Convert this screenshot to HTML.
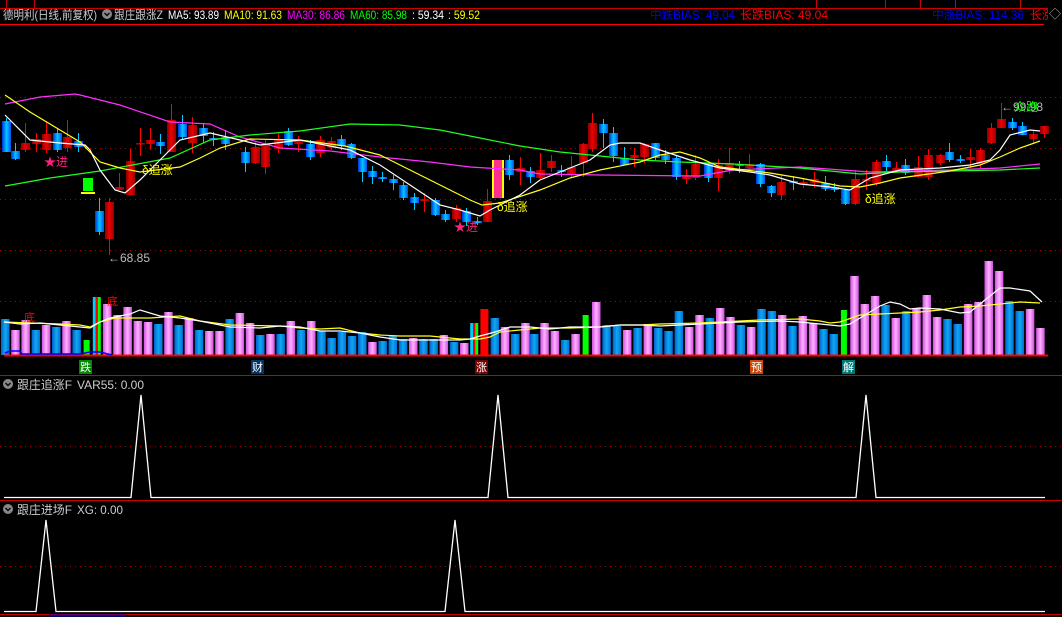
<!DOCTYPE html><html><head><meta charset="utf-8"><style>
html,body{margin:0;padding:0;background:#000;width:1062px;height:617px;overflow:hidden}
svg{display:block}
text{font-family:"Liberation Sans","Noto Sans CJK SC",sans-serif}
</style></head><body>
<svg id="s" width="1062" height="617" xmlns="http://www.w3.org/2000/svg">
<defs>
<linearGradient id="gr" x1="0" x2="1"><stop offset="0" stop-color="#800"/><stop offset=".45" stop-color="#e00"/><stop offset="1" stop-color="#900"/></linearGradient>
<linearGradient id="gb" x1="0" x2="1"><stop offset="0" stop-color="#0030e0"/><stop offset=".5" stop-color="#00c8ff"/><stop offset="1" stop-color="#0050f0"/></linearGradient>
<linearGradient id="gp" x1="0" x2="1"><stop offset="0" stop-color="#d050e0"/><stop offset=".5" stop-color="#ffb0ff"/><stop offset="1" stop-color="#d050e0"/></linearGradient>
<linearGradient id="gvb" x1="0" x2="1"><stop offset="0" stop-color="#0060d0"/><stop offset=".5" stop-color="#10a8f0"/><stop offset="1" stop-color="#0070d8"/></linearGradient>
</defs>
<g id="grid" stroke="#a00" stroke-dasharray="1,4" stroke-width="1">
<line x1="0" y1="97.5" x2="1062" y2="97.5"/><line x1="0" y1="148.5" x2="1062" y2="148.5"/><line x1="0" y1="199.5" x2="1062" y2="199.5"/><line x1="0" y1="250.5" x2="1062" y2="250.5"/>
<line x1="0" y1="301.5" x2="1062" y2="301.5"/><line x1="0" y1="446.5" x2="1062" y2="446.5"/><line x1="0" y1="566.5" x2="1062" y2="566.5"/>
</g>
<g stroke="#c00" stroke-width="1">
<line x1="0" y1="8.5" x2="1062" y2="8.5"/>
<line x1="6.5" y1="0" x2="6.5" y2="8"/><line x1="34.5" y1="0" x2="34.5" y2="8"/>
<line x1="816.5" y1="0" x2="816.5" y2="8"/><line x1="885.5" y1="0" x2="885.5" y2="8"/><line x1="920.5" y1="0" x2="920.5" y2="8"/><line x1="955.5" y1="0" x2="955.5" y2="8"/><line x1="1020.5" y1="0" x2="1020.5" y2="8"/><line x1="1048.5" y1="0" x2="1048.5" y2="8"/>
</g>
<line x1="0" y1="24.5" x2="1044" y2="24.5" stroke="#f00" stroke-width="1"/>
<line x1="0" y1="375.5" x2="1062" y2="375.5" stroke="#c00"/>
<line x1="0" y1="500.5" x2="1062" y2="500.5" stroke="#c00"/>
<line x1="0" y1="614.5" x2="1062" y2="614.5" stroke="#c00"/>
<line x1="49" y1="615.5" x2="126" y2="615.5" stroke="#00c" stroke-width="2"/>
<g id="c"></g>
<g fill="none" stroke-width="1.2">
<polyline stroke="#ff30ff" points="5,104 40,97 75,94 80,95 120,105 170,122 210,124 240,137 280,148 330,151 380,157 430,162 470,167 520,170 540,174 600,175 700,176 733,170 800,167 870,172 950,170 1000,168 1040,164"/>
<polyline stroke="#20ff20" points="5,186 50,178 100,171 170,158 210,140 250,135 300,131 350,124 400,125 440,130 480,138 520,146 560,152 600,156 640,160 680,162 733,164 800,168 860,174 900,172 950,171 1000,170 1040,168"/>
<polyline stroke="#ffff20" points="5,95 30,112 60,130 80,142 100,162 120,168 140,172 180,167 200,158 220,148 250,139 300,140 345,146 380,155 420,175 450,190 470,200 482,205 500,203 540,190 570,178 600,170 640,162 660,155 680,152 700,158 720,167 770,173 800,178 840,186 860,187 880,183 900,178 950,171 980,165 1000,157 1020,148 1040,141"/>
<polyline stroke="#fff" points="5,115 15,125 30,140 60,143 85,145 90,150 100,170 115,190 125,193 140,180 160,160 180,140 210,133 240,140 260,145 300,140 350,150 380,165 410,185 440,205 460,210 480,216 490,210 520,195 540,180 560,172 590,160 610,145 620,143 640,143 660,150 690,160 720,168 750,172 770,175 800,184 830,187 850,190 870,178 900,170 940,168 970,165 990,160 1000,150 1010,135 1030,130 1040,131"/>
</g>
<rect x="83" y="178" width="10" height="13" fill="#0f0"/><rect x="81" y="192" width="14" height="2" fill="#ff0"/>
<g font-size="12">
<text x="44" y="166" fill="#ff2080">★进</text>
<text x="454" y="231" fill="#ff2080">★进</text>
<text x="142" y="174" fill="#ff0">δ追涨</text>
<text x="497" y="211" fill="#ff0">δ追涨</text>
<text x="865" y="203" fill="#ff0">δ追涨</text>
<text x="108" y="262" fill="#bbb">←68.85</text>
<text x="1001" y="111" fill="#bbb">←99.98</text>
<text x="1014" y="111" fill="#0f0">众跑</text>
</g>
<g id="v"></g>
<line x1="4" y1="355.5" x2="1048" y2="355.5" stroke="#f00" stroke-width="2"/>
<polyline fill="none" stroke="#00f" stroke-width="1.5" points="5,353 10,351 20,351 22,354 80,354 85,353 90,352 100,352 112,355"/>
<g fill="none" stroke-width="1.2">
<polyline stroke="#ffff20" points="4,322 30,323 60,324 80,325 90,327 100,322 115,318 150,318 180,316 200,321 230,325 280,326 300,328 320,329 340,328 360,333 380,335 400,336 430,336 460,339 470,339 480,339 490,337 500,332 520,330 540,328 570,328 600,327 620,325 640,325 660,324 700,323 740,321 760,320 800,319 820,321 830,323 840,322 860,315 880,314 900,313 920,312 940,310 960,307 980,306 1000,304 1020,302 1040,303"/>
<polyline stroke="#fff" points="4,322 20,324 40,323 60,325 80,327 90,328 100,322 110,318 130,314 140,310 160,316 180,318 200,321 230,327 260,328 280,326 300,327 320,331 340,331 360,333 380,337 400,340 430,340 460,340 470,339 480,336 495,332 510,327 530,327 550,329 570,327 600,327 620,325 640,325 660,326 680,325 700,324 740,322 780,321 800,322 820,324 840,326 850,324 860,318 870,312 880,306 890,302 900,304 910,309 920,308 940,309 960,313 970,312 980,304 990,296 1000,288 1010,288 1030,291 1042,302"/>
</g>
<g font-size="11" fill="#f00"><text x="24" y="321">底</text><text x="107" y="305">底</text></g>
<g font-size="11" fill="#fff">
<rect x="79" y="360" width="13" height="14" fill="#080"/><text x="80" y="371">跌</text>
<rect x="251" y="360" width="13" height="14" fill="#036"/><text x="252" y="371">财</text>
<rect x="475" y="360" width="13" height="14" fill="#700"/><text x="476" y="371">涨</text>
<rect x="750" y="360" width="13" height="14" fill="#c40"/><text x="751" y="371">预</text>
<rect x="842" y="360" width="13" height="14" fill="#077"/><text x="843" y="371">解</text>
</g>
<g fill="none" stroke="#fff" stroke-width="1.3">
<polyline points="4,497.5 131,497.5 141,395 151,497.5 488,497.5 498,395 508,497.5 856,497.5 866,395 876,497.5 1045,497.5"/>
<polyline points="4,611.5 36,611.5 46,520 56,611.5 445,611.5 455,520 465,611.5 1045,611.5"/>
</g>
<g font-size="12" lengthAdjust="spacingAndGlyphs">
<circle cx="107" cy="14" r="5" fill="#888"/><path d="M104.5 13 L107 15.5 L109.5 13" stroke="#000" stroke-width="1.3" fill="none"/>
<circle cx="8" cy="384" r="5" fill="#888"/><path d="M5.5 383 L8 385.5 L10.5 383" stroke="#000" stroke-width="1.3" fill="none"/>
<circle cx="8" cy="509" r="5" fill="#888"/><path d="M5.5 508 L8 510.5 L10.5 508" stroke="#000" stroke-width="1.3" fill="none"/>
<text x="3" y="19" fill="#ccc" textLength="94" lengthAdjust="spacingAndGlyphs">德明利(日线,前复权)</text>
<text x="114" y="19" fill="#ccc" textLength="49" lengthAdjust="spacingAndGlyphs">跟庄跟涨Z</text>
<text x="168" y="19" fill="#fff" textLength="51" lengthAdjust="spacingAndGlyphs">MA5: 93.89</text>
<text x="224" y="19" fill="#ff0" textLength="58" lengthAdjust="spacingAndGlyphs">MA10: 91.63</text>
<text x="287" y="19" fill="#f0f" textLength="58" lengthAdjust="spacingAndGlyphs">MA30: 86.86</text>
<text x="350" y="19" fill="#0f0" textLength="57" lengthAdjust="spacingAndGlyphs">MA60: 85.98</text>
<text x="412" y="19" fill="#fff" textLength="32" lengthAdjust="spacingAndGlyphs">: 59.34</text>
<text x="448" y="19" fill="#ff0" textLength="32" lengthAdjust="spacingAndGlyphs">: 59.52</text>
<text x="650" y="19" fill="#00f" textLength="85" lengthAdjust="spacingAndGlyphs">中跌BIAS: 49.04</text>
<text x="740" y="19" fill="#f00" textLength="88" lengthAdjust="spacingAndGlyphs">长跌BIAS: 49.04</text>
<text x="932" y="19" fill="#00f" textLength="92" lengthAdjust="spacingAndGlyphs">中涨BIAS: 114.36</text>
<text x="1030" y="19" fill="#f00">长涨</text>
<rect x="1048" y="0" width="14" height="24" fill="#000"/>
<text x="1049" y="18" fill="#aaa">◇</text>
<text x="17" y="389" fill="#ccc" textLength="55" lengthAdjust="spacingAndGlyphs">跟庄追涨F</text><text x="77" y="389" fill="#ccc" textLength="67" lengthAdjust="spacingAndGlyphs">VAR55: 0.00</text>
<text x="17" y="514" fill="#ccc" textLength="55" lengthAdjust="spacingAndGlyphs">跟庄进场F</text><text x="77" y="514" fill="#ccc" textLength="46" lengthAdjust="spacingAndGlyphs">XG: 0.00</text>
</g>
</svg>
<script>
var C=[[1,121,152,118,152,'b'],[10,151,159,143,160,'b'],[20,143,150,123,152,'r'],[31,139,144,133,152,'r'],[41,134,150,122,153,'r'],[52,133,150,128,152,'b'],[62,137,148,120,152,'r'],[73,141,147,133,152,'b'],
[94,211,232,198,235,'b'],[104,202,239,198,255,'r'],[114,187,190,173,190,'r'],[125,161,195,149,195,'r'],[135,143,144,128,156,'r'],[145,140,144,128,150,'r'],[155,142,146,134,154,'b'],[166,120,152,104,152,'r'],[177,124,137,115,140,'b'],[187,125,143,117,153,'r'],[198,128,136,124,143,'b'],[208,138,140,132,146,'b'],[220,137,144,130,150,'b'],
[240,152,163,147,172,'b'],[250,147,163,142,164,'r'],[260,144,167,140,174,'r'],[273,139,149,133,153,'r'],[283,131,145,128,146,'b'],[293,140,144,136,152,'r'],[305,144,157,140,160,'b'],[315,140,153,136,157,'r'],[326,141,148,137,150,'r'],[336,139,146,135,150,'b'],
[346,144,158,143,159,'b'],[357,158,172,158,182,'b'],[367,171,177,166,184,'b'],[377,177,179,172,182,'b'],[388,179,183,175,190,'b'],[398,185,198,182,200,'b'],[409,197,203,193,210,'b'],[419,199,201,193,212,'r'],[430,200,215,198,216,'b'],[440,214,220,210,222,'b'],[451,208,219,205,222,'r'],[461,211,222,208,226,'b'],[472,221,223,217,225,'b'],[482,201,222,189,222,'r'],
[504,160,175,155,180,'b'],[515,168,172,157,185,'r'],[525,171,177,167,183,'b'],[535,170,178,153,180,'r'],[546,161,168,155,172,'r'],[556,170,172,165,177,'b'],[566,167,175,156,177,'r'],[578,144,163,143,177,'r'],[587,123,149,113,152,'r'],[598,124,133,119,148,'b'],[608,133,156,127,162,'b'],[619,158,165,147,165,'b'],[629,155,158,148,167,'r'],[639,144,157,143,163,'r'],[650,143,158,143,160,'b'],[660,155,160,150,164,'b'],[671,158,177,155,180,'b'],[681,176,179,169,184,'r'],[690,164,178,155,180,'r'],
[703,163,178,163,182,'b'],[713,165,178,159,191,'r'],[724,163,171,148,174,'r'],[734,164,166,161,173,'b'],[744,164,168,154,171,'r'],[755,164,184,163,187,'b'],[766,186,193,185,197,'b'],[776,182,195,174,200,'r'],[788,181,183,176,190,'b'],[798,182,184,178,188,'r'],[809,179,183,172,188,'r'],[820,183,189,176,191,'b'],[829,187,190,183,192,'b'],[840,190,204,190,205,'b'],[850,179,204,170,205,'r'],[861,179,181,170,190,'r'],[871,162,183,160,186,'r'],[881,161,167,155,172,'b'],[891,168,172,162,172,'r'],[900,165,173,159,175,'b'],[913,167,177,156,178,'r'],[923,155,177,149,180,'r'],[935,155,163,154,165,'r'],[944,152,160,143,162,'b'],[955,159,161,155,163,'b'],[965,157,160,149,168,'r'],[975,150,164,148,168,'r'],[986,128,143,123,144,'r'],[996,119,128,103,128,'r'],[1007,122,128,118,130,'b'],[1017,126,135,122,135,'b'],[1028,134,139,131,144,'r'],[1039,126,134,126,138,'r']];
var g=document.getElementById('c'),h='';
C.forEach(function(c){var cx=c[0]+5,col=c[5]=='r'?'#f00':'#0cf';
h+='<line x1="'+(cx+.5)+'" y1="'+c[3]+'" x2="'+(cx+.5)+'" y2="'+c[4]+'" stroke="'+col+'"/>';
h+='<rect x="'+(c[0]+1)+'" y="'+c[1]+'" width="9" height="'+Math.max(1.5,c[2]-c[1])+'" fill="url(#g'+c[5]+')"/>';});
h+='<rect x="492" y="160" width="12" height="38" fill="#ff0"/><rect x="494" y="160" width="8" height="38" fill="#ff2f8f"/>';
g.innerHTML=h;
var V=[319,'b',330,'p',320,'p',330,'b',325,'p',327,'b',321,'p',330,'b',340,'g',297,'s',304,'p',315,'p',307,'p',321,'p',322,'p',324,'b',312,'p',325,'b',318,'p',330,'b',331,'p',331,'p',319,'b',313,'p',323,'p',335,'b',334,'p',334,'b',321,'p',330,'b',321,'p',331,'b',338,'b',332,'b',336,'b',332,'b',342,'p',341,'b',336,'b',339,'b',338,'p',339,'b',339,'b',335,'p',342,'b',343,'p',323,'s',309,'r',318,'b',327,'p',334,'b',323,'p',
334,'b',323,'p',331,'p',340,'b',334,'p',315,'g',302,'p',325,'b',326,'b',330,'p',328,'b',324,'p',328,'b',331,'b',311,'b',327,'p',315,'p',318,'b',308,'p',317,'p',325,'b',327,'p',309,'b',311,'b',315,'p',326,'b',316,'p',323,'p',329,'b',334,'b',310,'g',276,'p',304,'p',296,'p',305,'b',318,'p',311,'b',308,'p',295,'p',317,'p',319,'b',324,'b',304,'p',302,'p',261,'p',271,'p',301,'b',311,'b',309,'p',328,'p'];
var vh='',n=V.length/2;
for(var i=0;i<n;i++){var x=i<52?1+10.2*i:530+10.33*(i-52),t=V[2*i],k=V[2*i+1],w=8.5,hh=355-t;
if(k=='b')vh+='<rect x="'+x+'" y="'+t+'" width="'+w+'" height="'+hh+'" fill="url(#gvb)"/>';
else if(k=='p')vh+='<rect x="'+x+'" y="'+t+'" width="'+w+'" height="'+hh+'" fill="url(#gp)"/>';
else if(k=='g')vh+='<rect x="'+(x+1)+'" y="'+t+'" width="6" height="'+hh+'" fill="#0f0"/>';
else if(k=='r')vh+='<rect x="'+x+'" y="'+t+'" width="8" height="'+hh+'" fill="#f00"/>';
else vh+='<rect x="'+x+'" y="'+t+'" width="3" height="'+hh+'" fill="#0cf"/><rect x="'+(x+3)+'" y="'+t+'" width="2" height="'+hh+'" fill="#f00"/><rect x="'+(x+5)+'" y="'+t+'" width="3" height="'+hh+'" fill="#0f0"/>';}
document.getElementById('v').innerHTML=vh;
</script>
</body></html>
